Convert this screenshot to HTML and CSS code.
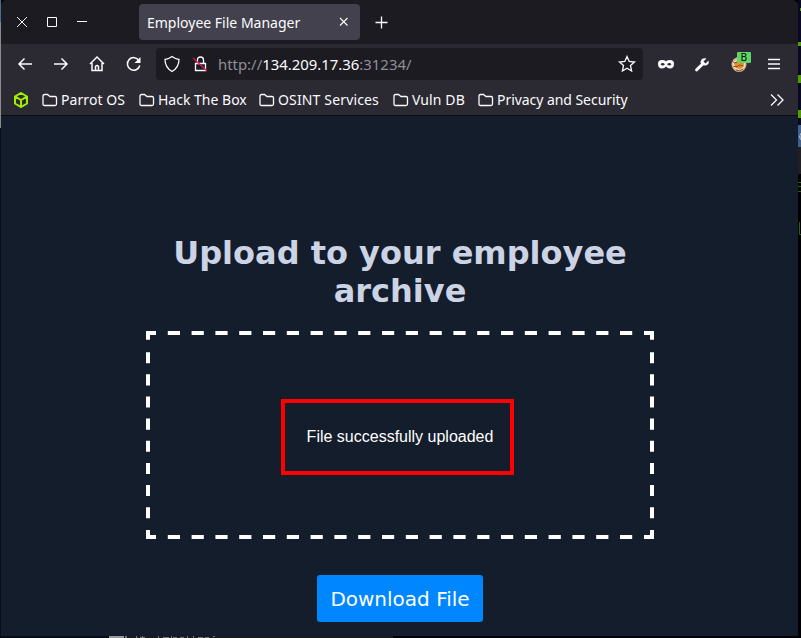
FILE: index.html
```
<!DOCTYPE html>
<html lang="en">
<head>
<meta charset="utf-8">
<title>Employee File Manager</title>
<link rel="stylesheet" href="styles.css">
</head>
<body>
<div class="desktop">
  <div class="edge-left"></div>
  <div class="window">
    <div class="titlebar">
      <svg class="controls" width="80" height="16" viewBox="0 0 80 16"><path d="M1 3l10 10M11 3L1 13M31.500 3.500h9v9h-9zM61 7.500h10"/></svg>
      <div class="tab"><span>Employee File Manager</span>
        <svg width="10" height="10" viewBox="0 0 10 10"><path d="M1 1l7.500 7.500M8.500 1L1 8.500"/></svg>
      </div>
      <svg class="plus" width="13" height="13" viewBox="0 0 13 13"><path d="M6.500 .5v12M.5 6.500h12"/></svg>
    </div>
    <div class="toolbar">
      <svg class="nav" width="130" height="20" viewBox="0 0 130 20"><path d="M15 10H2M7.500 4.500L2 10l5.500 5.500M37 10h13M44.500 4.500L50 10l-5.500 5.500M73 10L80 3l7 7M75 9v7.500h10V9M78.500 16.500v-4q1.500-2 3 0v4M122 6.500a6.300 6.300 0 1 0 .8 5"/><path class="solid" d="M123.500 3v6h-6z"/></svg>
      <div class="address">
        <svg width="50" height="20" viewBox="0 0 50 20"><path d="M8 2.500Q11.500 5 15 5.500q0 8-7 12-7-4-7-12Q4.500 5 8 2.500zM31.500 9.500h10v7h-10zM33.500 9V6q0-3 3-3t3 3v3"/><path class="slash" d="M29 4l14 13"/></svg>
        <span class="url">http://<b>134.209.17.36</b>:31234/</span>
        <svg class="star" width="18" height="18" viewBox="0 0 18 18"><path d="M9 1.500l2.200 4.900 5.300.6-4 3.600 1.100 5.400L9 13.300 4.400 16l1.100-5.400-4-3.600 5.300-.6z"/></svg>
      </div>
      <svg class="extensions" width="130" height="28" viewBox="0 0 130 28">
        <path class="mask" fill-rule="evenodd" d="M0 13.500Q0 10 4 10q2.500 0 4 1.200Q9.500 10 12 10q4 0 4 3.500 0 5-4 5-2.500 0-4-2-1.500 2-4 2-4 0-4-5zM2.500 14.300q2.200 2.400 4.400 0-2.200-2.800-4.400 0zM9.100 14.300q2.200 2.400 4.400 0-2.200-2.800-4.400 0z"/>
        <path class="solid" d="M50.500 10.500l-3 3-2-2 3-3q-3-1-5 1-1.500 2-.5 4l-5.700 5.500q-.7 1.700.7 2.200 1 .5 1.800-.4l5.700-5.600q2.500 1 4.500-1 1.200-1.500.5-3.700z"/>
        <circle class="solid bun" cx="81" cy="14.500" r="7.500"/><path class="filling" d="M75 12q6-3 11.500 0l-.5 5-4 3-5-2z"/><path class="crease" d="M73.500 11q3 3 6 1M75.500 16.500q4 1 6-1.500l4 1M78 20q4 2 7-1"/>
        <path class="menu" d="M110 9.500h12M110 14h12M110 18.500h12"/>
        <rect class="badge" x="79" y="2" width="14" height="11" rx="1"/><text x="82.500" y="11">B</text>
      </svg>
    </div>
    <div class="bookmarks">
      <svg class="cube" width="16" height="16" viewBox="0 0 16 16"><path d="M8 1l6 3.500v7L8 15l-6-3.500v-7zM3 5l5 3 5-3M8 8v6"/></svg>
      <a class="bookmark parrot"><svg width="16" height="14" viewBox="0 0 16 14"><path d="M1 11V3q0-1.500 1.500-1.500h3L8 3.500h5q1.500 0 1.500 1.500v6q0 1.500-1.500 1.500H2.500Q1 12.500 1 11z"/></svg><span>Parrot OS</span></a>
      <a class="bookmark box"><svg width="16" height="14" viewBox="0 0 16 14"><path d="M1 11V3q0-1.500 1.500-1.500h3L8 3.500h5q1.500 0 1.500 1.500v6q0 1.500-1.500 1.500H2.500Q1 12.500 1 11z"/></svg><span>Hack The Box</span></a>
      <a class="bookmark osint"><svg width="16" height="14" viewBox="0 0 16 14"><path d="M1 11V3q0-1.500 1.500-1.500h3L8 3.500h5q1.500 0 1.500 1.500v6q0 1.500-1.500 1.500H2.500Q1 12.500 1 11z"/></svg><span>OSINT Services</span></a>
      <a class="bookmark vuln"><svg width="16" height="14" viewBox="0 0 16 14"><path d="M1 11V3q0-1.500 1.500-1.500h3L8 3.500h5q1.500 0 1.500 1.500v6q0 1.500-1.500 1.500H2.500Q1 12.500 1 11z"/></svg><span>Vuln DB</span></a>
      <a class="bookmark privacy"><svg width="16" height="14" viewBox="0 0 16 14"><path d="M1 11V3q0-1.500 1.500-1.500h3L8 3.500h5q1.500 0 1.500 1.500v6q0 1.500-1.500 1.500H2.500Q1 12.500 1 11z"/></svg><span>Privacy and Security</span></a>
      <svg class="more" width="14" height="14" viewBox="0 0 14 14"><path d="M1 1.500L6.500 7 1 12.500M7.500 1.500L13 7l-5.500 5.500"/></svg>
    </div>
    <main>
      <h1>Upload to your employee archive</h1>
      <div class="dropzone">
        <svg class="dashes" width="508" height="208" viewBox="0 0 508 208">
          <path class="across" d="M21.800 2H486.300M21.800 206H486.300"/>
          <path class="down" d="M2 21.200V187.300M506 21.200V187.300"/>
          <path d="M2 8.800V2H10M498 2h8v6.800M506 199v7h-8M10 206H2v-7"/>
        </svg>
        <div class="message">File successfully uploaded</div>
      </div>
      <button>Download File</button>
    </main>
  </div>
  <svg class="edge-right" width="3" height="638" viewBox="0 0 3 638">
    <path fill="#080923" d="M0 0h3v125H0z"/>
    <path fill="#4d9e02" d="M2 8h1v3H2zM0 42h3v4H0zM0 75h3v8H0zM0 110h3v8H0z"/>
    <path fill="#40618d" d="M0 125h3v22H0z"/><path fill="#202020" d="M0 147h3v27H0z"/>
    <path stroke="#2d6505" d="M0 182.500h3M0 186.500h3M0 191.500h3M1.500 222v12.500h2" fill="none"/>
    <path stroke="#a9b3bf" d="M3 133Q0 137 3 140M1 137h2" fill="none"/>
  </svg>
  <svg class="edge-bottom" width="801" height="2" viewBox="0 0 801 2">
    <path fill="#1b1b1b" d="M109 0h284v2H109z"/><path fill="#999" d="M109 0h15v2h-15z"/>
    <path fill="#777" d="M125 0h2v2h-2zM136 0h1v2h-1zM140 1h5v1h-5zM142 0h1v1h-1zM158 0h1v2h-1zM163 1h6v1h-6zM171 0h1v2h-1zM173 1h4v1h-4zM180 1h4v1h-4zM187 0h1v2h-1zM193 0h1v2h-1zM198 1h5v1h-5zM205 1h4v1h-4zM213 0h2v1h-2z"/>
  </svg>
</div>
</body>
</html>
```
FILE: styles.css
```
* { box-sizing: border-box; }
body { margin: 0; background: #000; overflow: hidden; }
svg { display: block; flex: none; fill: none; stroke: #fbfbfe; stroke-width: 1.3; }
.desktop { display: grid; grid-template: 636px 2px / 1px 797px 3px; width: 801px; height: 638px; background: #000; }
.edge-left { background: linear-gradient(#466d94 0 22px, #8c8c8c 22px 128px, #090e19 128px); }
.edge-right { grid-column: 3; grid-row: 1 / 3; stroke: none; stroke-width: 1; }
.edge-bottom { grid-column: 1 / 4; grid-row: 2; stroke: none; background: linear-gradient(90deg, #080c14 109px, #000 109px); }
.window { display: flex; flex-direction: column; border-radius: 6px 6px 0 0; overflow: hidden; background: #141d2b; font: 14px/20px "Noto Sans", sans-serif; color: #fbfbfe; }
.titlebar { display: flex; align-items: center; height: 44px; background: #1c1b22; }
.controls { margin-left: 15px; stroke-width: 1; }
.tab { display: flex; align-items: center; justify-content: space-between; width: 221px; height: 36px; margin-left: 43px; padding: 0 11px 0 8px; border-radius: 4px; background: #42414d; }
.tab span { padding-top: 2px; white-space: nowrap; }
.tab svg { stroke-width: 1.1; }
.plus { margin: 1px 0 0 15px; }
.toolbar { display: flex; align-items: center; height: 41px; padding-bottom: 1px; background: #2b2a33; }
.nav { margin-left: 16px; stroke-width: 1.5; }
.solid { fill: #fbfbfe; stroke: none; }
.address { display: flex; align-items: center; width: 487px; height: 32px; margin-left: 9px; padding: 0 7px 0 8px; border-radius: 4px; background: #1c1b22; }
.slash { stroke: #e7144d; }
.url { margin-left: 4px; font-size: 14.9px; color: #8f8f98; }
.url b { font-weight: 400; color: #fbfbfe; }
.star { margin-left: auto; }
.extensions { margin-left: 15px; }
.mask { fill: #fbfbfe; stroke: none; }
.menu { stroke-width: 1.4; }
.bun { fill: #d9b994; }
.filling { fill: #f08a28; stroke: #fff0da; stroke-width: 1; }
.crease { stroke: #755038; stroke-width: 1; }
.badge { fill: #62d365; stroke: none; }
.extensions text { font: 10px "DejaVu Sans", sans-serif; fill: #111; stroke: none; }
.bookmarks { display: flex; align-items: center; height: 31px; padding: 0 14px 0 12px; border-bottom: 1px solid #0c0c10; background: #2b2a33; }
.cube { stroke: #9fef00; stroke-width: 2; }
.bookmark { display: flex; align-items: center; gap: 3px; white-space: nowrap; }
.parrot { width: 97px; margin-left: 13px; letter-spacing: .08px; }
.box { width: 120px; }
.osint { width: 134px; letter-spacing: .15px; }
.vuln { width: 85px; letter-spacing: .1px; }
.privacy { letter-spacing: -.05px; }
.more { margin-left: auto; }
main { display: flex; flex-direction: column; align-items: center; flex: 1; padding-top: 118px; }
h1 { width: 506px; margin: 0; padding-left: 1px; text-align: center; color: #cbd3e5; font: 700 32px/38px "DejaVu Sans", sans-serif; }
.dropzone { display: grid; width: 508px; height: 208px; margin-top: 21px; padding: 68px 0 0 135px; position: relative; }
.dashes { position: absolute; inset: 0; stroke: #fff; stroke-width: 4; }
.across { stroke-dasharray: 12.200 11.600; }
.down { stroke-dasharray: 11.070; }
.message { display: flex; align-items: center; justify-content: center; width: 233px; height: 76px; padding-left: 6px; border: 4px solid #f00; font: 16px/18px "Liberation Sans", sans-serif; color: #fff; }
button { width: 166px; height: 47px; margin-top: 36px; padding: 0 0 0 1px; border: 0; border-radius: 3px; background: #0086ff; color: #fff; font: 20px/24px "DejaVu Sans", sans-serif; }
```
